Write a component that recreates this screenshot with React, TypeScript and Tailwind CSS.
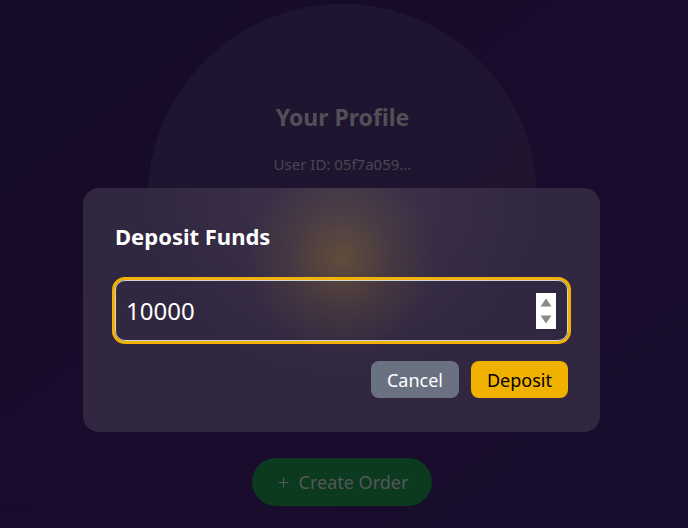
import { Plus } from "lucide-react";

const font = { fontFamily: '"Noto Sans", "Open Sans", sans-serif' };

function ProfileCard() {
  return (
    <div className="mt-1 mr-[3px] flex h-[396px] w-[389px] flex-col items-center rounded-t-[195px] rounded-b-2xl bg-gradient-to-br from-[#1d1530] to-[#21142f] pt-[97px]">
      <h2 className="text-[23px] leading-8 font-bold text-[#524f57]">Your Profile</h2>
      <p className="mt-5 text-[15px] text-[#4a4651]">User ID: 05f7a059...</p>
    </div>
  );
}

function Spinner() {
  return (
    <div className="pointer-events-none absolute top-[13px] right-[12px] flex h-9 w-5 flex-col items-center justify-between bg-white py-[5px]">
      <svg width="12" height="9" viewBox="0 0 12 9">
        <path d="M6 0.5 L11.5 8.5 L0.5 8.5 Z" fill="#8a8a8a" />
      </svg>
      <svg width="12" height="9" viewBox="0 0 12 9">
        <path d="M0.5 0.5 L11.5 0.5 L6 8.5 Z" fill="#8a8a8a" />
      </svg>
    </div>
  );
}

function DepositModal() {
  return (
    <div className="absolute inset-0 pt-[188px] pl-[83px]">
      <div className="relative w-[517px] overflow-hidden rounded-2xl bg-[#322740] px-8 pt-8 pb-[34px]">
        {/* soft yellow glow behind the input */}
        <div className="pointer-events-none absolute inset-0 bg-[radial-gradient(circle_at_50%_29%,rgba(234,179,8,0.22)_0,rgba(234,179,8,0.08)_50px,transparent_95px)]" />
        <div className="pointer-events-none absolute inset-0 bg-[radial-gradient(ellipse_at_50%_0%,rgba(255,255,255,0.06),transparent_55%)]" />
        <div className="relative">
          <h3 className="mb-[28px] text-[22px] leading-8 font-bold text-white">Deposit Funds</h3>
          <div className="relative">
            <input
              type="number"
              defaultValue={10000}
              className="h-[61px] w-full appearance-none rounded-[10px] border border-gray-300 bg-transparent px-[10px] text-2xl text-white outline-none ring-[3px] ring-yellow-500 [&::-webkit-inner-spin-button]:appearance-none"
            />
            <Spinner />
          </div>
          <div className="mt-5 flex justify-end gap-3">
            <button className="flex h-[37px] items-center rounded-lg bg-gray-500 px-4 text-lg text-white">
              Cancel
            </button>
            <button className="flex h-[37px] items-center rounded-lg bg-yellow-500 px-4 text-lg text-black">
              Deposit
            </button>
          </div>
        </div>
      </div>
    </div>
  );
}

export default function App() {
  return (
    <div
      className="relative h-[528px] w-full overflow-hidden bg-gradient-to-br from-[#140b27] via-[#1a0b2c] to-[#170d2c]"
      style={font}
    >
      <div className="flex flex-col items-center">
        <ProfileCard />
        <button className="mt-[58px] mr-1 flex h-12 items-center gap-2 whitespace-nowrap rounded-full bg-[#0b3a1e] px-6 text-lg text-[#55575a]">
          <Plus className="h-[15px] w-[15px]" strokeWidth={1.75} />
          Create Order
        </button>
      </div>
      <DepositModal />
    </div>
  );
}
